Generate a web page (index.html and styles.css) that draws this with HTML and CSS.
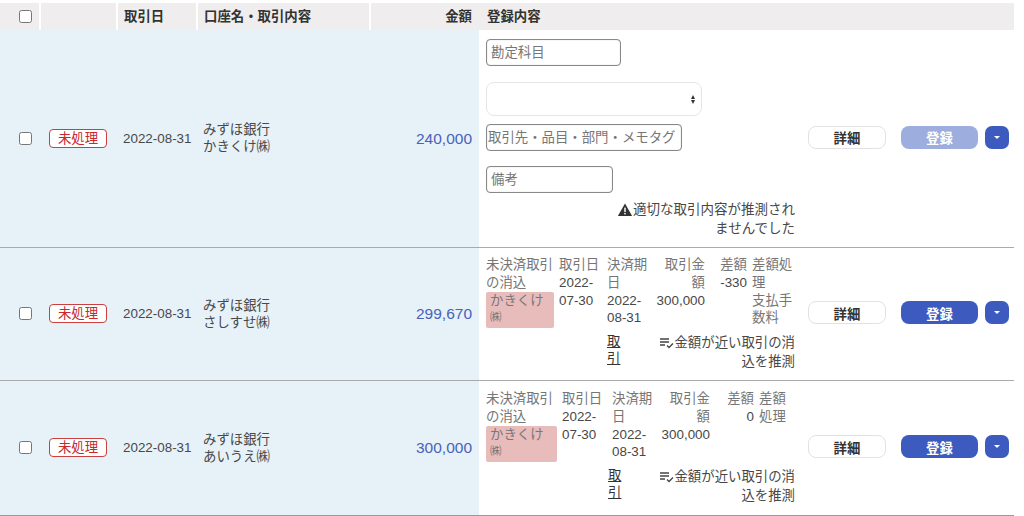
FILE: index.html
```html
<!DOCTYPE html>
<html lang="ja">
<head>
<meta charset="utf-8">
<title>取引登録</title>
<link rel="stylesheet" href="styles.css">
</head>
<body>
<svg class="defs" width="0" height="0" aria-hidden="true">
  <symbol id="warn" viewBox="0 0 16 16"><path d="M8 1.5 15.6 15H.4Z" fill="#333"/><rect x="7.2" y="6" width="1.6" height="4.6" fill="#fff"/><rect x="7.2" y="11.6" width="1.6" height="1.6" fill="#fff"/></symbol>
  <symbol id="list" viewBox="0 0 14 12"><path d="M0 2h9M0 5h9M0 8h5" stroke="#444" stroke-width="1.3" fill="none"/><path d="M7 8.5 9 10.5 13 6.5" stroke="#444" stroke-width="1.3" fill="none"/></symbol>
</svg>
<table class="list">
  <colgroup>
    <col class="c1"><col class="c2"><col class="c3"><col class="c4"><col class="c5"><col class="c6"><col class="c7"><col class="c8">
  </colgroup>
  <thead>
    <tr>
      <th class="center"><input type="checkbox" class="check"></th>
      <th></th>
      <th>取引日</th>
      <th>口座名・取引内容</th>
      <th class="right">金額</th>
      <th colspan="3" class="last">登録内容</th>
    </tr>
  </thead>
  <tbody>
    <tr class="row-a">
      <td class="tint center"><input type="checkbox" class="check"></td>
      <td class="tint center"><span class="badge">未処理</span></td>
      <td class="tint date">2022-08-31</td>
      <td class="tint name">みずほ銀行<br>かきくけ㈱</td>
      <td class="tint amount">240,000</td>
      <td class="content">
        <div class="form">
          <input class="field f-account" placeholder="勘定科目">
          <div class="select"><span class="updown"><i></i><i></i></span></div>
          <input class="field f-tag" placeholder="取引先・品目・部門・メモタグ">
          <input class="field f-note" placeholder="備考">
          <p class="hint"><svg class="warn"><use href="#warn"/></svg>適切な取引内容が推測されませんでした</p>
        </div>
      </td>
      <td class="act"><button class="btn-detail">詳細</button></td>
      <td class="act2"><div class="reg"><button class="btn-reg off">登録</button><button class="btn-more"><i></i></button></div></td>
    </tr>
    <tr class="row-b">
      <td class="tint center"><input type="checkbox" class="check"></td>
      <td class="tint center"><span class="badge">未処理</span></td>
      <td class="tint date">2022-08-31</td>
      <td class="tint name">みずほ銀行<br>さしすせ㈱</td>
      <td class="tint amount">299,670</td>
      <td class="content">
        <div class="match m1">
          <div class="muted">未決済取引の消込<div class="partner">かきくけ<small>㈱</small></div></div>
          <div><span class="muted">取引日</span><br>2022-07-30</div>
          <div><span class="muted">決済期日</span><br>2022-08-31</div>
          <div class="r"><span class="muted">取引金額</span><br>300,000</div>
          <div class="d"><span class="muted">差額</span><br>-330</div>
          <div><span class="muted">差額処理</span><br><span class="muted">支払手数料</span></div>
          <a class="link">取引</a>
          <p class="guess"><svg class="ico"><use href="#list"/></svg>金額が近い取引の消込を推測</p>
        </div>
      </td>
      <td class="act"><button class="btn-detail">詳細</button></td>
      <td class="act2"><div class="reg"><button class="btn-reg">登録</button><button class="btn-more"><i></i></button></div></td>
    </tr>
    <tr class="row-c">
      <td class="tint center"><input type="checkbox" class="check"></td>
      <td class="tint center"><span class="badge">未処理</span></td>
      <td class="tint date">2022-08-31</td>
      <td class="tint name">みずほ銀行<br>あいうえ㈱</td>
      <td class="tint amount">300,000</td>
      <td class="content">
        <div class="match m2">
          <div class="muted">未決済取引の消込<div class="partner">かきくけ<small>㈱</small></div></div>
          <div><span class="muted">取引日</span><br>2022-07-30</div>
          <div><span class="muted">決済期日</span><br>2022-08-31</div>
          <div class="r"><span class="muted">取引金額</span><br>300,000</div>
          <div class="d"><span class="muted">差額</span><br>0</div>
          <div class="muted">差額処理</div>
          <a class="link">取引</a>
          <p class="guess"><svg class="ico"><use href="#list"/></svg>金額が近い取引の消込を推測</p>
        </div>
      </td>
      <td class="act"><button class="btn-detail">詳細</button></td>
      <td class="act2"><div class="reg"><button class="btn-reg">登録</button><button class="btn-more"><i></i></button></div></td>
    </tr>
  </tbody>
</table>
</body>
</html>
```
FILE: styles.css
```css
* { box-sizing: border-box; }
html, body { background: #fff; }
body {
  margin: 0;
  padding-top: 3px;
  overflow: hidden;
  font-family: "Liberation Sans", "Noto Sans CJK JP", sans-serif;
  font-size: 13.4px;
  line-height: 17px;
  color: #484848;
}
.defs { position: absolute; }
.list { width: 1014px; table-layout: fixed; border-collapse: collapse; }
.c1 { width: 40px; } .c2 { width: 77px; } .c3 { width: 80px; } .c4 { width: 173px; }
.c5 { width: 109px; } .c6 { width: 328px; } .c7 { width: 92px; } .c8 { width: 115px; }
th {
  height: 27px;
  padding: 0 6px;
  background: #efeded;
  border-left: 2px solid #fff;
  text-align: left;
  font-weight: 700;
  font-size: 13.4px;
  color: #333;
}
th:first-child { border-left: 0; }
th.last { border-left: 0; padding-left: 8px; }
th.right { text-align: right; padding-right: 7px; }
th.center, td.center { text-align: center; padding: 0; }
td { padding: 0; vertical-align: middle; border-bottom: 1px solid #aaa; }
tbody tr:last-child td { border-bottom-color: #999; }
.row-a { height: 217px; }
.row-b { height: 133px; }
.row-c { height: 135px; }
.tint { background: #e6f1f8; }
.check {
  appearance: none;
  display: inline-block;
  vertical-align: middle;
  width: 13px;
  height: 13px;
  margin: 0 0 2px 11px;
  background: #fff;
  border: 1px solid #767676;
  border-radius: 2.5px;
}
.badge {
  display: inline-block;
  width: 58px;
  height: 19px;
  margin-left: -1px;
  border: 1px solid #c9403f;
  border-radius: 4px;
  background: #fff;
  color: #c9282c;
  font-size: 13.4px;
  line-height: 17px;
  text-align: center;
}
.date { padding-left: 6px; white-space: nowrap; }
.name { padding-left: 6px; }
.amount { padding-right: 7px; text-align: right; color: #4a62b8; font-size: 15.5px; }
.content { padding: 0 0 0 7px; }

.form { display: flex; flex-direction: column; align-items: flex-start; }
.field {
  display: block;
  height: 27px;
  padding: 0 4px;
  border: 1px solid #888;
  border-radius: 4px;
  background: #fff;
  font: 13.4px/17px "Liberation Sans", "Noto Sans CJK JP", sans-serif;
  box-shadow: inset 0 0 1px #aaa;
}
.field::placeholder { color: #767676; opacity: 1; }
.f-account { width: 135px; }
.f-tag { width: 196px; padding: 0 1px; margin-top: 8px; }
.f-note { width: 127px; margin-top: 15px; }
.select {
  position: relative;
  width: 216px;
  height: 34px;
  margin-top: 16px;
  border: 1px solid #e6e6e6;
  border-radius: 8px;
  background: #fff;
}
.updown { position: absolute; right: 6px; top: 12px; display: flex; flex-direction: column; gap: 1px; }
.updown i { width: 0; height: 0; border: 2.5px solid transparent; }
.updown i:first-child { border-top: 0; border-bottom: 4px solid #333; }
.updown i:last-child { border-bottom: 0; border-top: 4px solid #333; }
.hint {
  width: 309px;
  margin: 7px 0 0;
  padding-left: 128px;
  text-align: right;
  font-size: 13.5px;
  line-height: 19px;
}
.warn { width: 16px; height: 15px; vertical-align: -3px; }

.match {
  display: grid;
  width: 314px;
  line-height: 17.7px;
  row-gap: 5px;
}
.m1 { grid-template-columns: 73px 48px 48px 57px 40px 48px; }
.m2 { grid-template-columns: 76px 50px 49px 56px 42px 41px; }
.match > div { padding-right: 3px; }
.match > div:first-child { padding-right: 5px; }
.match > .r { text-align: right; padding-right: 7px; }
.match > .d { text-align: right; padding-right: 5px; }
.muted { color: #767676; }
.partner {
  height: 36px;
  padding: 0 4px;
  background: #e9bcbc;
  border-radius: 2px;
  color: #777;
}
.partner small { display: block; font-size: 11.5px; line-height: 17px; }
.link {
  grid-column: 3;
  width: 14px;
  padding: 0;
  color: #333;
  text-decoration: underline;
}
.m2 .link { margin-left: -4px; }
.guess {
  grid-column: 4 / -1;
  margin: 0;
  padding-right: 5px;
  text-align: right;
  line-height: 19px;
}
.m2 .guess { margin-left: -6px; }
.ico { width: 14px; height: 12px; vertical-align: -2px; }

button { font-family: inherit; cursor: pointer; }
.btn-detail {
  display: block;
  width: 78px;
  height: 23px;
  margin: 0 0 2px 1px;
  padding: 0;
  border: 1px solid #e2e2e2;
  border-radius: 8px;
  background: #fff;
  color: #333;
  font-size: 13.4px;
  font-weight: 700;
}
.reg { display: flex; gap: 7px; padding: 0 0 2px 2px; }
.btn-reg {
  width: 77px;
  height: 23px;
  padding: 0;
  border: 0;
  border-radius: 8px;
  background: #3d5abf;
  color: #fff;
  font-size: 13.4px;
  font-weight: 700;
}
.btn-reg.off { background: #9dadde; }
.btn-more {
  display: flex;
  align-items: center;
  justify-content: center;
  width: 24px;
  height: 23px;
  padding: 0;
  border: 0;
  border-radius: 7px;
  background: #3d5abf;
}
.btn-more i { width: 0; height: 0; border: 3px solid transparent; border-bottom: 0; border-top: 3px solid #fff; }
```
